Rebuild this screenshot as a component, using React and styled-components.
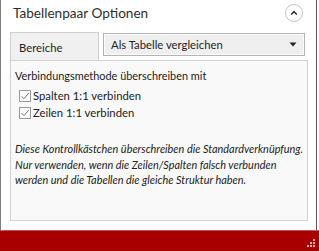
import React from "react";
import styled, { createGlobalStyle } from "styled-components";

const Global = createGlobalStyle`
  html, body { margin: 0; padding: 0; background: #fff; }
  body { font-family: Lato, "Open Sans", sans-serif; color: #222; }
`;

const Frame = styled.div`
  width: 319px;
  height: 251px;
  display: flex;
  flex-direction: column;
  overflow: hidden;
`;

const Main = styled.div`
  flex: 1;
  display: flex;
  flex-direction: column;
  border-left: 1px solid #7c7c7c;
  border-right: 1px solid #5a5a5a;
  margin-right: 2px;
  padding: 0 8px 0 9px;
`;

const Header = styled.div`
  height: 32px;
  box-sizing: border-box;
  display: flex;
  align-items: center;
  justify-content: space-between;
  padding: 0 4px 7px 3px;
`;

const Title = styled.div`
  font-size: 13.6px;
  color: #2e2e2e;
`;

const CollapseButton = styled.div`
  width: 16px;
  height: 16px;
  border: 1px solid #c4c4c4;
  border-radius: 50%;
  display: flex;
  align-items: center;
  justify-content: center;
  margin-right: 1px;
`;

const TabRow = styled.div`
  display: flex;
  align-items: flex-start;
`;

const Tab = styled.div`
  width: 89px;
  height: 28px;
  box-sizing: border-box;
  background: #f0f0f0;
  border: 1px solid #cfcfcf;
  border-bottom: none;
  display: flex;
  align-items: center;
  padding: 2px 0 0 8px;
  font-size: 11.3px;
  color: #1e1e1e;
`;

const Select = styled.div`
  margin-left: 4px;
  margin-top: 1px;
  width: 202px;
  height: 23px;
  box-sizing: border-box;
  border: 1px solid #b4b4b4;
  box-shadow: inset 0 0 0 1px #fbfbfb;
  background: #efefef;
  display: flex;
  align-items: center;
  justify-content: space-between;
  padding: 0 7px 0 7px;
  font-size: 11.3px;
  color: #1e1e1e;
`;

const Panel = styled.div`
  height: 161px;
  box-sizing: border-box;
  background: #f9f9f9;
  border: 1px solid #d2d2d2;
  padding: 7px 4px;
  font-size: 10.9px;
  color: #222;
`;

const Heading = styled.div`
  line-height: 15px;
  margin-bottom: 4px;
`;

const CheckRow = styled.label`
  display: flex;
  align-items: center;
  gap: 2px;
  margin-left: 4px;
  height: 17px;
  font-size: 11.3px;
`;

const Box = styled.span`
  width: 12px;
  height: 12px;
  box-sizing: border-box;
  border: 1px solid #9a9a9a;
  background: #fff;
  display: inline-flex;
  align-items: center;
  justify-content: center;
`;

const Note = styled.p`
  margin: 20px 0 0 0;
  font-style: italic;
  font-size: 10.9px;
  line-height: 15.5px;
  white-space: nowrap;
`;

const Spacer = styled.div`
  height: 9px;
`;

const Footer = styled.div`
  height: 20px;
  background: #a80000;
  border-top: 1px solid #c85050;
  display: flex;
  justify-content: flex-end;
  align-items: flex-end;
  padding: 0 4px 3px 0;
`;

const Check = () => (
  <Box>
    <svg width="10" height="10" viewBox="0 0 10 10">
      <path d="M1.5 5.2 L4 7.8 L8.8 1.8" fill="none" stroke="#777" strokeWidth="1" />
    </svg>
  </Box>
);

const Grip = () => (
  <svg width="10" height="10" viewBox="0 0 10 10">
    {[[8, 0], [5, 3], [8, 3], [2, 6], [5, 6], [8, 6]].map(([x, y], i) => (
      <rect key={i} x={x} y={y + 1} width="2" height="2" fill="#efb4b4" />
    ))}
  </svg>
);

export default function App() {
  return (
    <Frame>
      <Global />
      <Main>
        <Header>
          <Title>Tabellenpaar Optionen</Title>
          <CollapseButton>
            <svg width="10" height="10" viewBox="0 0 10 10">
              <path d="M2.2 6.5 L5 3.7 L7.8 6.5" fill="none" stroke="#333" strokeWidth="1.6" />
            </svg>
          </CollapseButton>
        </Header>
        <TabRow>
          <Tab>Bereiche</Tab>
          <Select>
            <span>Als Tabelle vergleichen</span>
            <svg width="8" height="5" viewBox="0 0 8 5">
              <path d="M0.5 0.5 L7.5 0.5 L4 4.5 Z" fill="#222" />
            </svg>
          </Select>
        </TabRow>
        <Panel>
          <Heading>Verbindungsmethode überschreiben mit</Heading>
          <CheckRow><Check />Spalten 1:1 verbinden</CheckRow>
          <CheckRow><Check />Zeilen 1:1 verbinden</CheckRow>
          <Note>
            Diese Kontrollkästchen überschreiben die Standardverknüpfung.
            <br />
            Nur verwenden, wenn die Zeilen/Spalten falsch verbunden
            <br />
            werden und die Tabellen die gleiche Struktur haben.
          </Note>
        </Panel>
        <Spacer />
      </Main>
      <Footer>
        <Grip />
      </Footer>
    </Frame>
  );
}
